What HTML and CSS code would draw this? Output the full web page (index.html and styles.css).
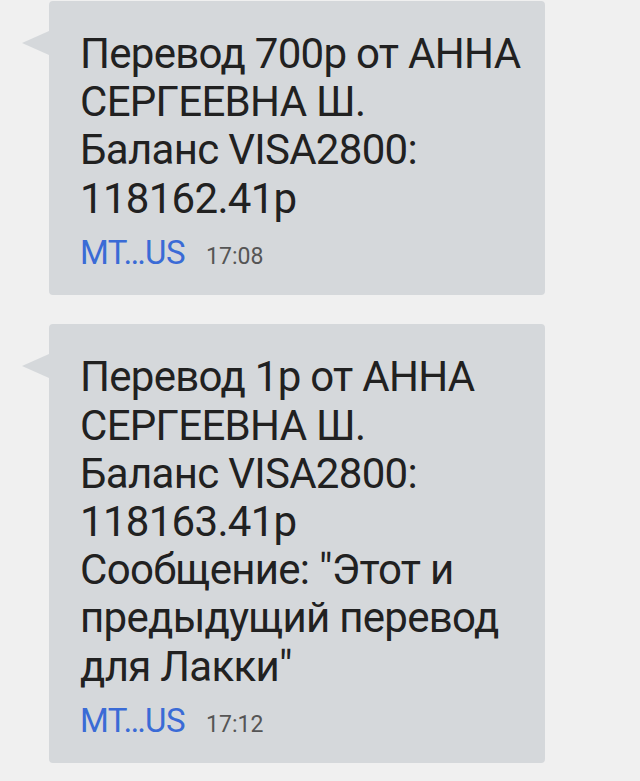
FILE: index.html
```html
<!DOCTYPE html>
<html lang="ru">
<head>
  <meta charset="UTF-8" />
  <meta name="viewport" content="width=device-width, initial-scale=1.0"/>
  <title>Сообщения</title>
  <link rel="stylesheet" href="styles.css">
</head>
<body>
  <div class="thread">

    <!-- Message 1 -->
    <div class="bubble">
      <p class="text">Перевод 700р от АННА<br>СЕРГЕЕВНА Ш.<br>Баланс VISA2800:<br>118162.41р</p>
      <div class="meta">
        <span class="sender">MT…US</span>
        <span class="time">17:08</span>
      </div>
    </div>

    <!-- Message 2 -->
    <div class="bubble">
      <p class="text">Перевод 1р от АННА<br>СЕРГЕЕВНА Ш.<br>Баланс VISA2800:<br>118163.41р<br>Сообщение: "Этот и<br>предыдущий перевод<br>для Лакки"</p>
      <div class="meta">
        <span class="sender">MT…US</span>
        <span class="time">17:12</span>
      </div>
    </div>

  </div>
</body>
</html>
```

FILE: styles.css
```css
body {
  margin: 0;
  padding: 0;
  background-color: #f0f0f0;
  font-family: Roboto, "Noto Sans", sans-serif;
}

.thread {
  display: flex;
  flex-direction: column;
  gap: 29px;
  padding: 1px 95px 0 49px;
}

.bubble {
  position: relative;
  background-color: #d5d8db;
  border-radius: 4px;
  padding: 29px 20px 23px 31px;
}

/* little tail pointing left */
.bubble::before {
  content: "";
  position: absolute;
  left: -27px;
  top: 30px;
  border-top: 12px solid transparent;
  border-bottom: 12px solid transparent;
  border-right: 27px solid #d5d8db;
}

.text {
  margin: 0;
  font-size: 42px;
  line-height: 48.2px;
  letter-spacing: -0.7px;
  color: #212121;
}

.meta {
  display: flex;
  align-items: baseline;
  gap: 21px;
  margin-top: 11.5px;
}

.sender {
  font-size: 33px;
  line-height: 38px;
  letter-spacing: -0.5px;
  color: #3a6bd6;
}

.time {
  font-size: 23px;
  color: #555;
}
```
